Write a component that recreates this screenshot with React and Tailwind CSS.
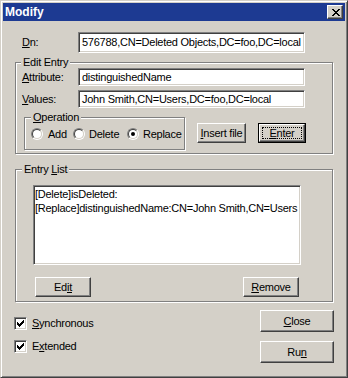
import React from "react";

const sunken =
  "border border-t-[#808080] border-l-[#808080] border-r-white border-b-white shadow-[inset_1px_1px_0_#404040,inset_-1px_-1px_0_#d4d0c8] bg-white";
const raised =
  "border border-t-white border-l-white border-r-[#404040] border-b-[#404040] shadow-[inset_-1px_-1px_0_#808080,inset_1px_1px_0_#d4d0c8] bg-[#d4d0c8]";
const group =
  "relative border border-[#808080] shadow-[inset_1px_1px_0_#fff,1px_1px_0_#fff]";

function U({ children }) {
  return <span className="underline underline-offset-[1px]">{children}</span>;
}

function Legend({ children, left }) {
  return (
    <span
      className={`absolute -top-[8px] ${left} bg-[#d4d0c8] px-[2px] leading-[14px]`}
    >
      {children}
    </span>
  );
}

function Input({ value, h = "h-[18px]" }) {
  return (
    <div
      className={`${sunken} ${h} w-[227px] flex items-center pl-[3px] overflow-hidden whitespace-nowrap`}
    >
      {value}
    </div>
  );
}

function Button({ children, w, h = "h-[20px]" }) {
  return (
    <div className={`${raised} ${w} ${h} flex items-center justify-center whitespace-nowrap`}>
      {children}
    </div>
  );
}

function Radio({ checked }) {
  return (
    <span className="w-[12px] h-[12px] rounded-full border border-t-[#808080] border-l-[#808080] border-r-white border-b-white flex shrink-0">
      <span className="flex-1 rounded-full border border-t-[#404040] border-l-[#404040] border-r-[#d4d0c8] border-b-[#d4d0c8] bg-white flex items-center justify-center">
        {checked && <span className="w-[4px] h-[4px] rounded-full bg-black" />}
      </span>
    </span>
  );
}

function Check() {
  const px = [
    [6, 0, 1],
    [5, 1, 2],
    [0, 2, 1],
    [4, 2, 3],
    [0, 3, 2],
    [3, 3, 3],
    [0, 4, 5],
    [1, 5, 3],
    [2, 6, 1],
  ];
  return (
    <span className={`${sunken} w-[13px] h-[13px] flex items-center justify-center shrink-0`}>
      <svg width="7" height="7" viewBox="0 0 7 7" shapeRendering="crispEdges">
        {px.map(([x, y, w], i) => (
          <rect key={i} x={x} y={y} width={w} height="1" fill="#000" />
        ))}
      </svg>
    </span>
  );
}

function CloseGlyph() {
  const rows = [
    [[0, 2], [6, 2]],
    [[1, 2], [5, 2]],
    [[2, 4]],
    [[3, 2]],
    [[2, 4]],
    [[1, 2], [5, 2]],
    [[0, 2], [6, 2]],
  ];
  return (
    <svg width="8" height="7" viewBox="0 0 8 7" shapeRendering="crispEdges">
      {rows.map((segs, y) =>
        segs.map(([x, w], i) => (
          <rect key={`${y}-${i}`} x={x} y={y} width={w} height="1" fill="#000" />
        ))
      )}
    </svg>
  );
}

export default function App() {
  return (
    <div
      className="w-[348px] h-[378px] bg-[#d4d0c8] border border-t-[#d4d0c8] border-l-[#d4d0c8] border-r-[#404040] border-b-[#404040] shadow-[inset_1px_1px_0_#fff,inset_-1px_-1px_0_#808080] p-[2px] text-[11px] leading-[13px] tracking-[-0.25px] text-black flex flex-col"
      style={{ fontFamily: '"Liberation Sans", Arial, sans-serif' }}
    >
      {/* Title bar */}
      <div className="h-[18px] bg-[#1d3a92] flex items-center justify-between pl-[2px] pr-[2px] shrink-0">
        <span className="text-white font-bold text-[12px] leading-[14px] tracking-normal">Modify</span>
        <div className={`${raised} w-[16px] h-[14px] flex items-center justify-center pl-[1px]`}>
          <CloseGlyph />
        </div>
      </div>

      {/* Content */}
      <div className="px-3 pt-[11px] flex flex-col">
        {/* Dn row */}
        <div className="flex items-center">
          <span className="w-[63px] pl-[7px]">
            <U>D</U>n:
          </span>
          <Input value="576788,CN=Deleted Objects,DC=foo,DC=local" h="h-[21px]" />
        </div>

        {/* Edit Entry */}
        <div className={`${group} mt-[9px] h-[92px] pt-[5px] flex flex-col`}>
          <Legend left="left-[5px]">Edit Entry</Legend>
          <div className="flex items-center">
            <span className="w-[62px] pl-[6px]">
              <U>A</U>ttribute:
            </span>
            <Input value="distinguishedName" />
          </div>
          <div className="flex items-center mt-[4px]">
            <span className="w-[62px] pl-[6px]">
              <U>V</U>alues:
            </span>
            <Input value="John Smith,CN=Users,DC=foo,DC=local" />
          </div>
          <div className="flex mt-[9px] ml-[8px]">
            <div className={`${group} w-[161px] h-[33px] flex items-center pl-[6px] pt-[1px]`}>
              <Legend left="left-[6px]">
                <U>O</U>peration
              </Legend>
              <div className="w-[42px] flex items-center gap-[5px]">
                <Radio />
                <span>Add</span>
              </div>
              <div className="w-[54px] flex items-center gap-[4px]">
                <Radio />
                <span>Delete</span>
              </div>
              <div className="flex items-center gap-[4px] whitespace-nowrap">
                <Radio checked />
                <span>Replace</span>
              </div>
            </div>
            <div className="ml-[12px] mt-[6px]">
              <Button w="w-[49px]">
                <span>
                  <U>I</U>nsert file
                </span>
              </Button>
            </div>
            <div className="ml-[12px] mt-[6px] w-[48px] h-[20px] border border-black flex">
              <div className="flex-1 border border-t-white border-l-white border-r-[#404040] border-b-[#404040] shadow-[inset_-1px_-1px_0_#808080] p-[2px] flex">
                <span className="flex-1 border border-dotted border-black flex items-center justify-center">
                  <span>
                    <U>E</U>nter
                  </span>
                </span>
              </div>
            </div>
          </div>
        </div>

        {/* Entry List */}
        <div className={`${group} mt-[15px] h-[133px] pt-[15px] flex flex-col`}>
          <Legend left="left-[6px]">
            Entry <U>L</U>ist
          </Legend>
          <div className={`${sunken} ml-[17px] w-[268px] h-[80px] pt-[1px] pl-[1px] leading-[14px] whitespace-nowrap overflow-hidden`}>
            <div>[Delete]isDeleted:</div>
            <div>[Replace]distinguishedName:CN=John Smith,CN=Users</div>
          </div>
          <div className="flex justify-between mt-[12px] pl-[19px] pr-[33px]">
            <Button w="w-[56px]">
              <span>
                Ed<U>it</U>
              </span>
            </Button>
            <Button w="w-[56px]">
              <span>
                <U>R</U>emove
              </span>
            </Button>
          </div>
        </div>

        {/* Bottom */}
        <div className="flex justify-between mt-[8px] -ml-[1px] -mr-[1px]">
          <div className="flex flex-col pt-[7px] gap-[10px]">
            <div className="flex items-center gap-[5px] h-[13px]">
              <Check />
              <span>
                <U>S</U>ynchronous
              </span>
            </div>
            <div className="flex items-center gap-[5px] h-[13px]">
              <Check />
              <span>
                E<U>x</U>tended
              </span>
            </div>
          </div>
          <div className="flex flex-col gap-[9px]">
            <Button w="w-[74px]" h="h-[22px]">
              <span>
                <U>C</U>lose
              </span>
            </Button>
            <Button w="w-[74px]" h="h-[22px]">
              <span>
                Ru<U>n</U>
              </span>
            </Button>
          </div>
        </div>
      </div>
    </div>
  );
}
